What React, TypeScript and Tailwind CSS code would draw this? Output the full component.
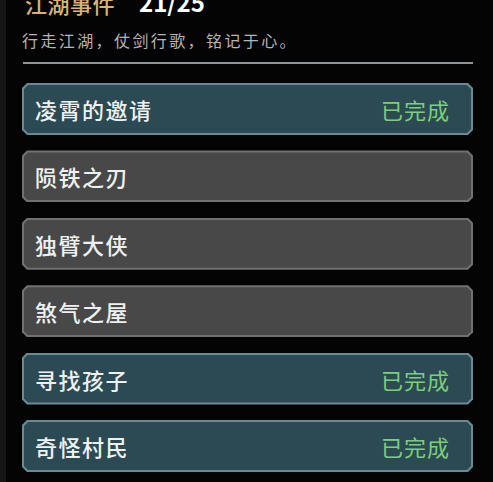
const events = [
  { name: "凌霄的邀请", done: true },
  { name: "陨铁之刃", done: false },
  { name: "独臂大侠", done: false },
  { name: "煞气之屋", done: false },
  { name: "寻找孩子", done: true },
  { name: "奇怪村民", done: true },
];

const cut = "[clip-path:polygon(5px_0,calc(100%-5px)_0,100%_5px,100%_calc(100%-5px),calc(100%-5px)_100%,5px_100%,0_calc(100%-5px),0_5px)]";

function EventRow({ name, done }: { name: string; done: boolean }) {
  return (
    <div
      className={`h-[52px] p-[2px] ${cut} ${done ? "bg-[#6a8b94]" : "bg-[#717171]"}`}
    >
      <div
        className={`h-full flex items-center justify-between pl-[11px] pr-[21px] [clip-path:polygon(4px_0,calc(100%-4px)_0,100%_4px,100%_calc(100%-4px),calc(100%-4px)_100%,4px_100%,0_calc(100%-4px),0_4px)] ${
          done ? "bg-[#2c4a54]" : "bg-[#484848]"
        }`}
      >
        <span className="text-[22px] leading-none tracking-[1.5px] text-[#eef1f1] font-medium">
          {name}
        </span>
        {done && (
          <span className="text-[22px] leading-none tracking-[1px] text-[#7ccf78]">已完成</span>
        )}
      </div>
    </div>
  );
}

export default function App() {
  return (
    <div
      className="w-[493px] h-[482px] overflow-hidden bg-[#040404] border-l-[6px] border-[#151515]"
      style={{ fontFamily: '"Noto Sans CJK SC", "Noto Sans", sans-serif' }}
    >
      <div className="pl-[16px] pr-[20px]">
        <div className="flex items-end -mt-[9px] h-[23px]">
          <span className="pl-[3px] text-[22px] leading-none tracking-[0.5px] text-[#d9b27a] font-medium">
            江湖事件
          </span>
          <span className="ml-[24px] text-[24px] leading-none text-white font-semibold">21/25</span>
        </div>
        <p className="mt-[18px] text-[16px] leading-none tracking-[2.4px] text-[#b5b5b5]">
          行走江湖，仗剑行歌，铭记于心。
        </p>
        <div className="mt-[14px] ml-[1px] h-[2px] bg-[#8e949b]" />
        <div className="mt-[19px] flex flex-col gap-[15.4px]">
          {events.map((e) => (
            <EventRow key={e.name} name={e.name} done={e.done} />
          ))}
        </div>
      </div>
    </div>
  );
}
